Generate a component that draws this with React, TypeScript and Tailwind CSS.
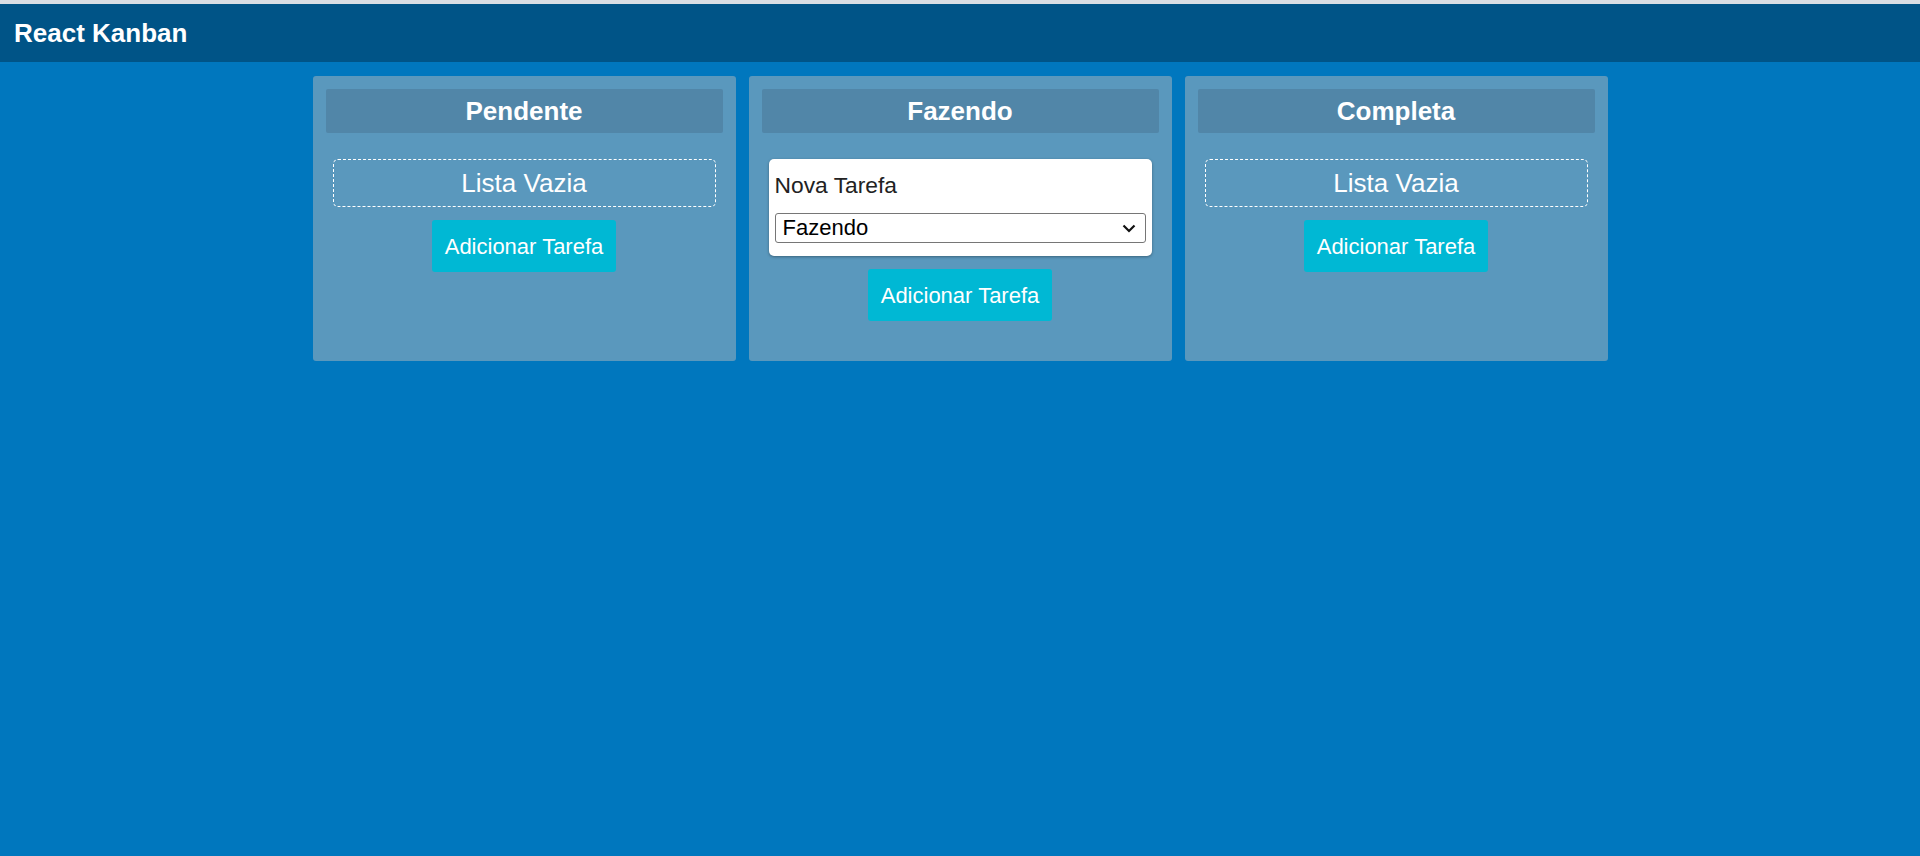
import React from "react";

const columns = [
	{ title: "Pendente", tasks: [] as string[], adding: false },
	{ title: "Fazendo", tasks: [] as string[], adding: true },
	{ title: "Completa", tasks: [] as string[], adding: false },
];

const App: React.FC = () => {
	return (
		<div className="min-h-screen bg-[#0077be] border-t-4 border-[#d9dee4] font-['Liberation_Sans',Arial,sans-serif]">
			{/* Header */}
			<header className="h-[58px] bg-[#005487] flex items-center px-[14px]">
				<h1 className="text-[26px] font-bold text-white">React Kanban</h1>
			</header>

			{/* Board */}
			<main className="flex justify-center items-stretch gap-[13px] pt-[14px]">
				{columns.map((col) => (
					<section
						key={col.title}
						className="w-[423px] bg-[#5a98bd] rounded-[3px] px-[13px] pt-[13px] pb-[40px] flex flex-col"
					>
						<div className="h-[44px] bg-[#5186a8] rounded-[2px] flex items-center justify-center">
							<h2 className="text-[26px] font-bold text-white">{col.title}</h2>
						</div>

						<div className="mt-[26px] px-[7px] flex flex-col items-center gap-[13px]">
							{col.adding ? (
								<div className="w-full bg-white rounded-[5px] shadow-[0_1px_3px_rgba(0,0,0,0.35)] px-[6px] pt-[14px] pb-[13px]">
									<p className="text-[22.8px] leading-[25px] text-[#222]">Nova Tarefa</p>
									<div className="relative mt-[15px]">
										<select
											defaultValue="Fazendo"
											className="block w-full h-[30px] appearance-none bg-white border border-[#767676] rounded-[3px] pl-[7px] text-[22px] leading-[26px] text-black"
										>
											<option>Pendente</option>
											<option>Fazendo</option>
											<option>Completa</option>
										</select>
										<svg
											className="absolute right-[10px] top-[11px] pointer-events-none"
											width="14"
											height="9"
											viewBox="0 0 14 9"
											fill="none"
										>
											<path d="M1.5 1.5 L7 7 L12.5 1.5" stroke="#111" strokeWidth="2.2" />
										</svg>
									</div>
								</div>
							) : (
								<div className="w-full h-[48px] border border-dashed border-white rounded-[5px] flex items-center justify-center">
									<span className="text-[26px] text-white">Lista Vazia</span>
								</div>
							)}
							<button className="h-[52px] px-[13px] bg-[#00b8d4] text-white text-[22px] rounded-[3px]">
								Adicionar Tarefa
							</button>
						</div>
					</section>
				))}
			</main>
		</div>
	);
};

export default App;
